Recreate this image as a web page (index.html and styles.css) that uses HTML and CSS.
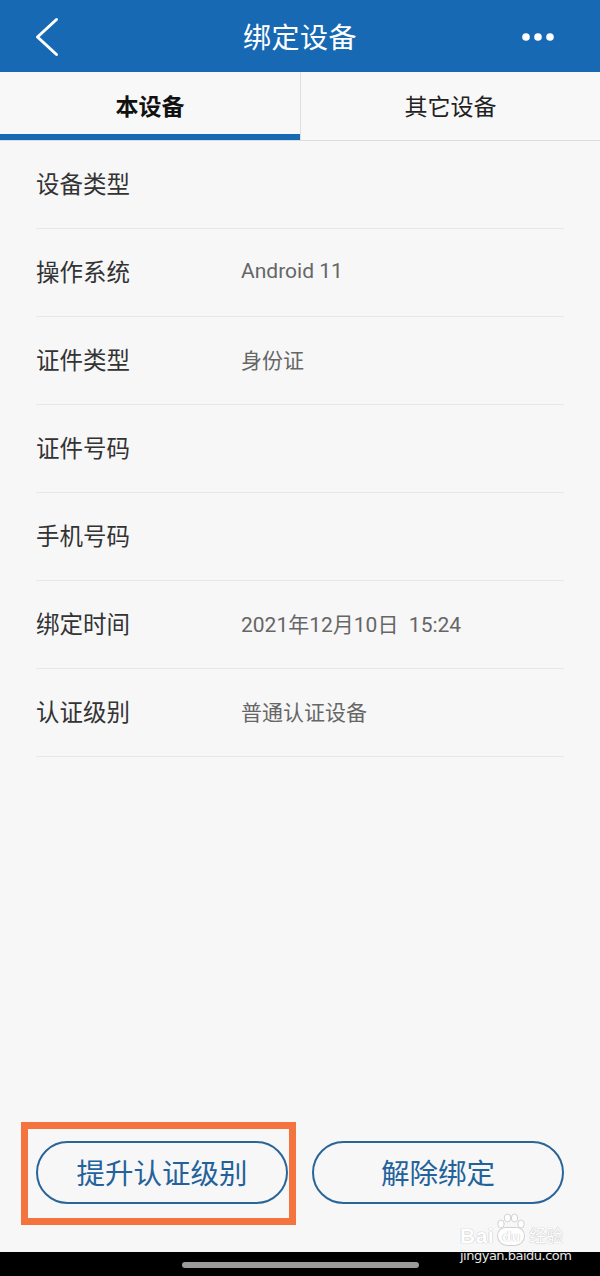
FILE: index.html
```html
<!DOCTYPE html>
<html lang="zh-CN">
<head>
<meta charset="utf-8">
<title>绑定设备</title>
<link rel="stylesheet" href="styles.css">
</head>
<body>
<div class="screen">
  <header class="appbar">
    <div class="appbar-left">
      <svg class="back" width="26" height="40" viewBox="0 0 26 40"><path d="M22.5 2.5 L3.5 20 L22.5 37.5" fill="none" stroke="#fff" stroke-width="3" stroke-linecap="round" stroke-linejoin="round"/></svg>
    </div>
    <h1 class="title">绑定设备</h1>
    <div class="appbar-right">
      <svg class="more" width="34" height="10" viewBox="0 0 34 10"><circle cx="5" cy="5" r="3.8" fill="#fff"/><circle cx="17" cy="5" r="3.8" fill="#fff"/><circle cx="29" cy="5" r="3.8" fill="#fff"/></svg>
    </div>
  </header>

  <nav class="tabs">
    <div class="tab tab-active">本设备</div>
    <div class="tab">其它设备</div>
  </nav>

  <section class="list">
    <div class="row"><span class="label">设备类型</span><span class="value"></span></div>
    <div class="row"><span class="label">操作系统</span><span class="value">Android 11</span></div>
    <div class="row"><span class="label">证件类型</span><span class="value">身份证</span></div>
    <div class="row"><span class="label">证件号码</span><span class="value"></span></div>
    <div class="row"><span class="label">手机号码</span><span class="value"></span></div>
    <div class="row"><span class="label">绑定时间</span><span class="value">2021年12月10日&nbsp;&nbsp;15:24</span></div>
    <div class="row"><span class="label">认证级别</span><span class="value">普通认证设备</span></div>
  </section>

  <div class="spacer"></div>

  <footer class="actions">
    <div class="action-wrap">
      <button class="btn">提升认证级别</button>
      <div class="highlight"></div>
    </div>
    <div class="action-wrap">
      <button class="btn">解除绑定</button>
    </div>
  </footer>

  <div class="navbar">
    <div class="home-indicator"></div>
  </div>

  <div class="watermark">
    <div class="wm-top">
      <span class="wm-bai">Bai</span>
      <span class="wm-paw">
        <svg class="wm-toes" width="28" height="16" viewBox="0 0 28 16"><ellipse cx="4" cy="11" rx="3.2" ry="4" fill="#fff" stroke="#d2d2d2" stroke-width="1"/><ellipse cx="10.5" cy="5" rx="3.2" ry="4" fill="#fff" stroke="#d2d2d2" stroke-width="1"/><ellipse cx="17.5" cy="5" rx="3.2" ry="4" fill="#fff" stroke="#d2d2d2" stroke-width="1"/><ellipse cx="24" cy="11" rx="3.2" ry="4" fill="#fff" stroke="#d2d2d2" stroke-width="1"/></svg>
        <span class="wm-du">du</span>
      </span>
      <span class="wm-jy">经验</span>
    </div>
    <div class="wm-url">jingyan.baidu.com</div>
  </div>
</div>
</body>
</html>
```

FILE: styles.css
```css
* { box-sizing: border-box; }

html, body {
  margin: 0;
  padding: 0;
  background: #f7f7f8;
}

body {
  font-family: Roboto, "Noto Sans CJK SC", "Noto Sans", sans-serif;
}

.screen {
  position: relative;
  width: 600px;
  height: 1276px;
  display: flex;
  flex-direction: column;
  background: #f7f7f8;
  overflow: hidden;
}

.appbar {
  height: 72px;
  flex: 0 0 72px;
  background: #1769b4;
  display: grid;
  grid-template-columns: 100px 1fr 100px;
  align-items: center;
}

.appbar-left {
  padding-left: 34px;
  display: flex;
  align-items: center;
  padding-top: 1px;
}

.appbar-right {
  display: flex;
  justify-content: flex-end;
  padding-right: 45px;
  padding-top: 2px;
}

.title {
  margin: 0;
  text-align: center;
  color: #fff;
  font-family: "Noto Sans CJK SC", sans-serif;
  font-weight: 400;
  font-size: 28px;
  line-height: 40px;
  letter-spacing: 0.5px;
}

.tabs {
  flex: 0 0 69px;
  height: 69px;
  display: grid;
  grid-template-columns: 1fr 1fr;
  background: #f9f8f9;
  border-bottom: 1px solid #dcdcdc;
}

.tab {
  display: flex;
  align-items: center;
  justify-content: center;
  font-family: "Noto Sans CJK SC", sans-serif;
  font-size: 23px;
  color: #222;
  padding-bottom: 3px;
}

.tab + .tab {
  border-left: 1px solid #dedede;
}

.tab-active {
  font-weight: 700;
  color: #111;
  box-shadow: inset 0 -6px 0 #1769b4;
}

.list {
  padding: 0 36px;
}

.row {
  height: 88px;
  display: grid;
  grid-template-columns: 205px 1fr;
  align-items: center;
  border-bottom: 1px solid #e7e7e7;
  padding-bottom: 4px;
}

.label {
  font-family: "Noto Sans CJK SC", sans-serif;
  font-size: 23.5px;
  color: #333;
}

.value {
  font-size: 21px;
  color: #666;
}

.spacer {
  flex: 1 1 auto;
}

.actions {
  display: grid;
  grid-template-columns: 252px 252px;
  column-gap: 24px;
  justify-content: center;
  padding-bottom: 48px;
}

.action-wrap {
  position: relative;
}

.btn {
  width: 252px;
  height: 63px;
  border: 2px solid #2a6598;
  border-radius: 32px;
  background: transparent;
  color: #23629a;
  font-family: "Noto Sans CJK SC", sans-serif;
  font-size: 28.5px;
  padding: 0 0 3px;
  display: block;
}

.highlight {
  position: absolute;
  left: -15px;
  top: -19px;
  width: 275px;
  height: 103px;
  border: 7px solid #f4743f;
  pointer-events: none;
}

.navbar {
  flex: 0 0 24px;
  height: 24px;
  background: #000;
  display: flex;
  justify-content: center;
  padding-top: 10px;
}

.home-indicator {
  width: 237px;
  height: 6px;
  border-radius: 3px;
  background: #9b9b9b;
}

.watermark {
  position: absolute;
  left: 460px;
  top: 1208px;
  width: 112px;
  color: #fff;
  font-family: "DejaVu Sans", sans-serif;
  text-shadow: 0 0 1px #bdbdbd, 0 0 1px #bdbdbd;
}

.wm-top {
  display: flex;
  align-items: flex-end;
  height: 38px;
}

.wm-bai {
  font-family: "Liberation Sans", sans-serif;
  font-size: 21px;
  line-height: 21px;
  font-weight: 700;
  letter-spacing: 0.5px;
}

.wm-paw {
  display: flex;
  flex-direction: column;
  align-items: center;
  margin-left: 2px;
  width: 30px;
}

.wm-toes {
  display: block;
  margin-bottom: -1px;
}

.wm-du {
  font-size: 13px;
  line-height: 17px;
  font-weight: 700;
  width: 26px;
  text-align: center;
  border-radius: 10px 10px 12px 12px;
  background: #fff;
  color: #fff;
  box-shadow: 0 0 0 1px #d0d0d0;
  text-shadow: 0 0 1px #999;
  margin-bottom: 1px;
}

.wm-jy {
  font-family: "Noto Sans CJK SC", sans-serif;
  font-size: 17px;
  line-height: 22px;
  margin-left: 3px;
}

.wm-url {
  font-size: 13px;
  line-height: 16px;
  letter-spacing: -0.5px;
  color: #e6e6e6;
  text-shadow: none;
  margin-top: 2px;
}
```
